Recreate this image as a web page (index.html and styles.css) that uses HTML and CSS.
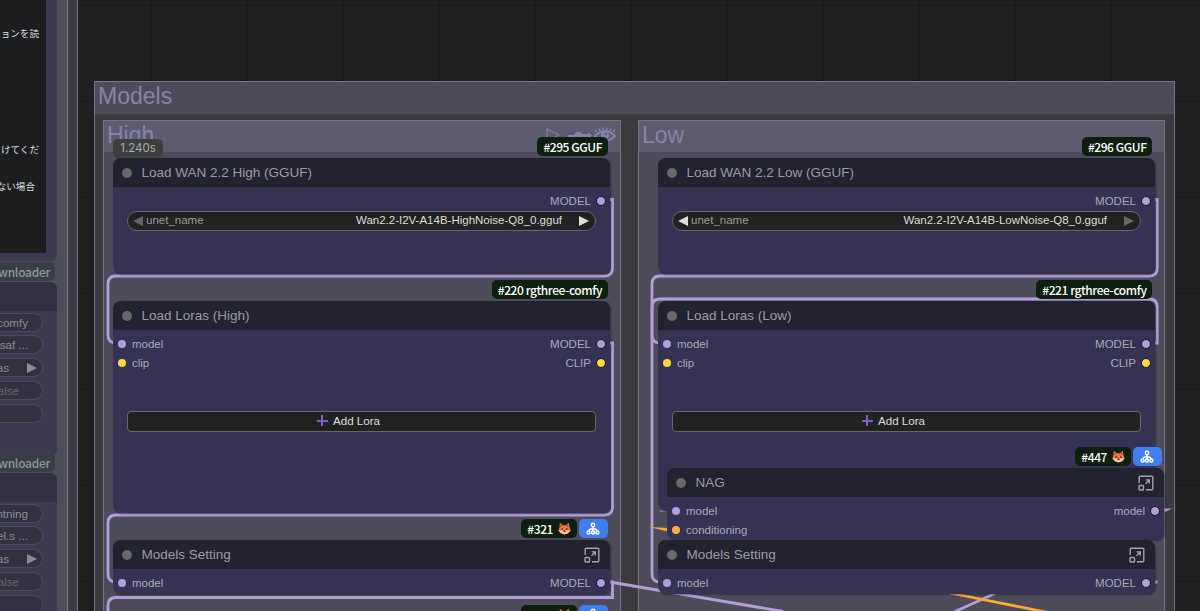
FILE: index.html
```html
<!DOCTYPE html>
<html lang="en">
<head>
    <meta charset="UTF-8">
    <meta name="viewport" content="width=device-width, initial-scale=1.0">
    <title>Workflow - Models</title>
    <link rel="stylesheet" href="styles.css">
</head>
<body>

<!-- shared icons -->
<svg class="defs" width="0" height="0">
    <symbol id="fox" viewBox="0 0 14 14">
        <path d="M2 .8 5.500 3.500h3L11.500.8l1 5 1.200 3.700-3 3-3.700 1-3.700-1-3-3L1.500 5.800z" fill="#f0763e"/>
        <path d="M2.700 2.300 4.600 4 2.700 5.300zM10.900 2.300 9 4l1.900 1.300z" fill="#8a3f3c"/>
        <path d="M.8 9.300 4.500 9 7 9.800 9.500 9l3.700.3-2.700 2.900L7 13.200l-3.500-1z" fill="#ffc9a8"/>
        <circle cx="4.500" cy="7.500" r=".9" fill="#3a2020"/>
        <circle cx="9.500" cy="7.500" r=".9" fill="#3a2020"/>
        <ellipse cx="7" cy="10" rx="1.200" ry=".9" fill="#3a2020"/>
    </symbol>
    <symbol id="tree" viewBox="0 0 14 14">
        <g fill="none" stroke="#fff" stroke-width="1.5">
            <circle cx="7" cy="3" r="1.7"/>
            <circle cx="2.6" cy="10.6" r="1.5"/>
            <circle cx="7" cy="10.6" r="1.5"/>
            <circle cx="11.4" cy="10.6" r="1.5"/>
            <path d="M7 4.700v4.400M2.800 9.100C3 7.300 4.500 6.800 7 6.800s4 .5 4.200 2.300"/>
        </g>
    </symbol>
    <symbol id="expand" viewBox="0 0 16 16">
        <g fill="none" stroke="#a2a2aa" stroke-width="1.4">
            <path d="M1.200 8V2.200q0-1 1-1h11.600q1 0 1 1v11.600q0 1-1 1H8"/>
            <rect x="1" y="10.500" width="4.500" height="4.500" rx=".8"/>
            <path d="M7.500 8.700 11 5.200M7.700 4.900h3.600v3.600"/>
        </g>
    </symbol>
</svg>

<div class="canvas">

    <!-- left side, faded nodes -->
    <div class="group side-outer"></div>
    <div class="group side-inner"></div>
    <div class="faded note-node">
        <div class="note">
            <p class="line1">ョンを読</p>
            <p class="line2">けてくだ</p>
            <p class="line3">ない場合</p>
        </div>
    </div>
    <div class="faded-badge side-badge-a">wnloader</div>
    <div class="faded side-node side-a">
        <div class="side-title"></div>
        <div class="side-widgets">
            <div class="pill">comfy</div>
            <div class="pill">.saf ...</div>
            <div class="pill combo">as <i class="tri"></i></div>
            <div class="pill dim">alse</div>
            <div class="pill"></div>
        </div>
    </div>
    <div class="faded-badge side-badge-b">wnloader</div>
    <div class="faded side-node side-b">
        <div class="side-title"></div>
        <div class="side-widgets">
            <div class="pill">htning</div>
            <div class="pill">el.s ...</div>
            <div class="pill combo">as <i class="tri"></i></div>
            <div class="pill dim">alse</div>
            <div class="pill"></div>
        </div>
    </div>

    <!-- groups -->
    <div class="group models"><div class="group-title">Models</div></div>
    <div class="group sub high">
        <div class="group-title">High
            <svg class="group-icons" width="74" height="20" viewBox="0 0 74 20">
                <path d="M4 3v12l12-6z" fill="none" stroke="#7f7b9e" stroke-width="1.200"/>
                <path d="M25 9h6q2-4 6-3l2 2h6V6l4 3.500-4 3.500v-2h-6q-4 4-8 0h-6z" fill="#8583ad"/>
                <path d="M52 10Q62 0 72 10 62 20 52 10z" fill="none" stroke="#8583ad" stroke-width="2"/>
                <circle cx="62" cy="9.500" r="4" fill="#8583ad"/>
                <circle cx="63" cy="8" r="1.300" fill="#5d5b6e"/>
                <path d="M54 6l-2-2M57 5l-1-2.500M60 4V1.500M64 4V1.500M67 5l1-2.500M70 6l2-2" stroke="#8583ad" stroke-width="1.200"/>
            </svg>
        </div>
    </div>
    <div class="group sub low"><div class="group-title">Low</div></div>

    <!-- links -->
    <svg class="links" width="1200" height="611" viewBox="0 0 1200 611">
        <g fill="none" stroke="#b39ddb" stroke-width="2.800">
            <path d="M610 199.500h2.500V268q0 8-8 8H116q-8 0-8 8v51q0 8 8 8h6"/>
            <path d="M610 343h2.500v164q0 8-8 8H116q-8 0-8 8v51q0 8 8 8h6"/>
            <path d="M610 582h2.500v15.500H116q-8 0-8 8V620"/>
            <path d="M610 582 783 611.500"/>
            <path d="M1155 199.500h2.200V268q0 8-8 8H660q-8 0-8 8v51q0 8 8 8h6"/>
            <path d="M1155 343h2.200V307q0-8-8-8H660q-8 0-8 8v267q0 8 8 8h6"/>
            <path d="M996 593 954 612"/>
            <path d="M950 593 1046 612" stroke="#ffa931"/>
        </g>
        <path d="M649 527 668 528V531.500z" fill="#ffa931"/>
        <path d="M1164 508.500h8l-8 4z" fill="#b39ddb"/>
        <circle cx="1156" cy="582" r="1.700" fill="#b39ddb"/>
        <path d="M660 511h7" stroke="#b39ddb" stroke-width="1"/>
    </svg>

    <!-- High column -->
    <div class="timer">1.240s</div>
    <div class="node load-high">
        <div class="node-title"><i class="dot"></i>Load WAN 2.2 High (GGUF)</div>
        <div class="slots">
            <div class="slot"><span class="out">MODEL<i class="port model ring"></i></span></div>
        </div>
        <div class="widget"><i class="tri left off"></i><span class="name">unet_name</span><span class="value">Wan2.2-I2V-A14B-HighNoise-Q8_0.gguf</span><i class="tri"></i></div>
    </div>
    <div class="badges b-295"><span class="badge">#295 GGUF</span></div>

    <div class="node lora-high">
        <div class="node-title"><i class="dot"></i>Load Loras (High)</div>
        <div class="slots">
            <div class="slot"><span class="in"><i class="port model"></i>model</span><span class="out">MODEL<i class="port model ring"></i></span></div>
            <div class="slot"><span class="in"><i class="port clip"></i>clip</span><span class="out">CLIP<i class="port clip ring"></i></span></div>
        </div>
        <div class="add-lora"><i class="plus"></i>Add Lora</div>
    </div>
    <div class="badges b-220"><span class="badge">#220 rgthree-comfy</span></div>

    <div class="node setting-high">
        <div class="node-title"><i class="dot"></i>Models Setting<svg class="expand"><use href="#expand"/></svg></div>
        <div class="slots">
            <div class="slot"><span class="in"><i class="port model"></i>model</span><span class="out">MODEL<i class="port model ring"></i></span></div>
        </div>
    </div>
    <div class="badges b-321"><span class="badge">#321<svg class="fox"><use href="#fox"/></svg></span><span class="badge blue"><svg class="tree"><use href="#tree"/></svg></span></div>
    <div class="badges b-next"><span class="badge">#322<svg class="fox"><use href="#fox"/></svg></span><span class="badge blue"><svg class="tree"><use href="#tree"/></svg></span></div>

    <!-- Low column -->
    <div class="node load-low">
        <div class="node-title"><i class="dot"></i>Load WAN 2.2 Low (GGUF)</div>
        <div class="slots">
            <div class="slot"><span class="out">MODEL<i class="port model ring"></i></span></div>
        </div>
        <div class="widget"><i class="tri left"></i><span class="name">unet_name</span><span class="value">Wan2.2-I2V-A14B-LowNoise-Q8_0.gguf</span><i class="tri off"></i></div>
    </div>
    <div class="badges b-296"><span class="badge">#296 GGUF</span></div>

    <div class="node lora-low">
        <div class="node-title"><i class="dot"></i>Load Loras (Low)</div>
        <div class="slots">
            <div class="slot"><span class="in"><i class="port model"></i>model</span><span class="out">MODEL<i class="port model ring"></i></span></div>
            <div class="slot"><span class="in"><i class="port clip"></i>clip</span><span class="out">CLIP<i class="port clip ring"></i></span></div>
        </div>
        <div class="add-lora"><i class="plus"></i>Add Lora</div>
    </div>
    <div class="badges b-221"><span class="badge">#221 rgthree-comfy</span></div>

    <div class="node nag">
        <div class="node-title"><i class="dot"></i>NAG<svg class="expand"><use href="#expand"/></svg></div>
        <div class="slots">
            <div class="slot"><span class="in"><i class="port model"></i>model</span><span class="out">model<i class="port model ring"></i></span></div>
            <div class="slot"><span class="in"><i class="port cond"></i>conditioning</span></div>
        </div>
    </div>
    <div class="badges b-447"><span class="badge">#447<svg class="fox"><use href="#fox"/></svg></span><span class="badge blue"><svg class="tree"><use href="#tree"/></svg></span></div>

    <div class="node setting-low">
        <div class="node-title"><i class="dot"></i>Models Setting<svg class="expand"><use href="#expand"/></svg></div>
        <div class="slots">
            <div class="slot"><span class="in"><i class="port model"></i>model</span><span class="out">MODEL<i class="port model ring"></i></span></div>
        </div>
    </div>

</div>

</body>
</html>
```
FILE: styles.css
```css
* {
    box-sizing: border-box;
}

body {
    margin: 0;
    background: #202020;
    font-family: "Liberation Sans", Arial, sans-serif;
    overflow: hidden;
}

.defs {
    position: absolute;
}

.canvas {
    position: relative;
    width: 1200px;
    height: 611px;
    overflow: hidden;
    background-color: #202020;
    background-image:
        linear-gradient(to right, #1b1b1b 1px, transparent 1px),
        linear-gradient(to bottom, #1b1b1b 1px, transparent 1px);
    background-size: 96px 96px;
    background-position: 55px 5px;
}

/* groups */
.group {
    position: absolute;
    border: 1px solid #77748f;
}

.side-outer { left: -10px; top: -10px; width: 88px; height: 640px; background: #3b3b41; }
.side-inner { left: -10px; top: -10px; width: 78px; height: 640px; background: #4e4d5b; }

.models { left: 94px; top: 81px; width: 1081px; height: 560px; background: #3a3a3f; }
.high { left: 103px; top: 120px; width: 518px; height: 520px; }
.low { left: 638px; top: 120px; width: 527px; height: 520px; }

.sub {
    background: #4e4c5a;
}

.group-title {
    display: flex;
    justify-content: space-between;
    height: 32px;
    padding: 0 3px;
    font-size: 23px;
    line-height: 29px;
    color: #8583ad;
    background: #4e4c5a;
}

.sub .group-title {
    height: 31px;
    background: #5d5b6d;
}

.group-icons {
    margin-top: 5px;
}

.links {
    position: absolute;
    left: 0;
    top: 0;
}

/* nodes */
.node {
    position: absolute;
    width: 497px;
    background: #353253;
    border-radius: 8px;
    box-shadow: 1px 1px 2px rgba(0, 0, 0, 0.35);
}

.load-high { left: 113px; top: 158px; height: 116px; }
.lora-high { left: 113px; top: 301px; height: 212px; }
.setting-high { left: 113px; top: 540px; height: 54px; }
.load-low { left: 658px; top: 158px; height: 116px; }
.lora-low { left: 658px; top: 301px; height: 210px; }
.nag { left: 667px; top: 468px; height: 72px; }
.setting-low { left: 658px; top: 540px; height: 54px; }

.node-title {
    display: flex;
    align-items: center;
    height: 29px;
    padding: 0 10px 0 9px;
    font-size: 13.500px;
    color: #9b9ba3;
    background: #232231;
    border-radius: 8px 8px 0 0;
}

.dot {
    width: 10px;
    height: 10px;
    margin-right: 9.500px;
    border-radius: 50%;
    background: #68686b;
}

.expand {
    width: 16px;
    height: 16px;
    margin-left: auto;
}

.slots {
    padding: 4px 4px 0 5px;
}

.slot {
    display: flex;
    height: 19.300px;
    font-size: 11.500px;
    line-height: 20px;
    color: #aaa9b8;
}

.in, .out {
    display: flex;
    align-items: center;
    gap: 5px;
}

.in {
    gap: 6px;
}

.out {
    margin-left: auto;
}

.port {
    width: 8px;
    height: 8px;
    border-radius: 50%;
}

.port.model { background: #b39ddb; }
.port.clip { background: #ffd93b; }
.port.cond { background: #ffa944; }

.ring {
    width: 10px;
    height: 10px;
    border: 1.500px solid #14131c;
}

.widget {
    display: flex;
    align-items: center;
    height: 20px;
    margin: 0.700px 14px 0;
    padding: 0 6px 0 5px;
    font-size: 11.500px;
    line-height: 17px;
    color: #999;
    background: #222;
    border: 1px solid #666;
    border-radius: 10px;
}

.name, .value {
    margin-top: -1px;
}

.value {
    margin-left: auto;
    margin-right: 17px;
    color: #ddd;
}

.tri {
    border-left: 10px solid #ddd;
    border-top: 5px solid transparent;
    border-bottom: 5px solid transparent;
}

.tri.left {
    margin-right: 3px;
    border-left: none;
    border-right: 10px solid #ddd;
}

.tri.off { border-left-color: #666; }
.tri.left.off { border-right-color: #666; }

.add-lora {
    display: flex;
    align-items: center;
    justify-content: center;
    height: 21px;
    margin: 38px 14px 0;
    padding-right: 26px;
    padding-bottom: 1px;
    font-size: 11.600px;
    color: #ddd;
    background: #222;
    border: 1px solid #666;
    border-radius: 4px;
}

.plus {
    width: 11px;
    height: 11px;
    margin-right: 5px;
    background:
        linear-gradient(#7e5fc4, #7e5fc4) center / 11px 2px no-repeat,
        linear-gradient(#7e5fc4, #7e5fc4) center / 2px 11px no-repeat;
}

/* badges */
.badges {
    position: absolute;
    display: flex;
    gap: 2px;
}

.b-295 { right: 592.500px; top: 137px; }
.b-220 { right: 592.500px; top: 280px; }
.b-321 { right: 592.500px; top: 519px; }
.b-next { right: 592.500px; top: 605px; }
.b-296 { right: 48px; top: 137px; }
.b-221 { right: 48px; top: 280px; }
.b-447 { right: 38.500px; top: 447px; }

.badge {
    display: flex;
    align-items: center;
    height: 19px;
    padding: 0 5.500px 0 6px;
    font-family: "Noto Sans CJK JP", sans-serif;
    font-size: 12px;
    font-weight: 500;
    line-height: 19px;
    letter-spacing: -0.430px;
    color: #fff;
    background: #0f1f0f;
    border-radius: 5px;
    white-space: nowrap;
}

.badge.blue {
    padding: 0 7.500px;
    background: #3f7ff0;
}

.fox {
    width: 13px;
    height: 13px;
    margin-left: 5px;
}

.tree {
    width: 14px;
    height: 14px;
}

.timer {
    position: absolute;
    left: 113px;
    top: 139px;
    width: 50px;
    height: 19px;
    font-family: Inter, sans-serif;
    font-size: 11.500px;
    line-height: 18px;
    text-align: center;
    color: #aaa;
    background: #3d3f3f;
    border-radius: 5px;
}

/* faded nodes on the left */
.faded {
    position: absolute;
    left: -20px;
    background: #3c3a51;
    border-radius: 7px;
}

.note-node {
    top: -10px;
    width: 77px;
    height: 271px;
}

.note {
    width: 66px;
    height: 263px;
    padding: 34px 7px 0 0;
    font-family: "Noto Sans CJK JP", sans-serif;
    font-size: 9.600px;
    color: #ddd;
    text-align: right;
    background: #1b1d1f;
    white-space: nowrap;
}

.note p {
    height: 19px;
    margin: 0;
    line-height: 19px;
}

.note .line2 { margin-top: 97px; }
.note .line3 { margin-top: 18px; padding-right: 4px; }

.faded-badge {
    position: absolute;
    left: -20px;
    width: 75px;
    height: 19px;
    padding-right: 5px;
    font-family: "Noto Sans CJK JP", sans-serif;
    font-size: 12px;
    font-weight: 500;
    line-height: 19px;
    letter-spacing: -0.300px;
    text-align: right;
    color: #8d9897;
    background: #393f47;
    border-radius: 5px;
}

.side-badge-a { top: 262px; }
.side-badge-b { top: 453px; }

.side-node {
    width: 77px;
    height: 175px;
}

.side-a { top: 282px; }
.side-b { top: 473px; }

.side-title {
    height: 29px;
    background: #323143;
    border-radius: 7px 7px 0 0;
}

.side-widgets {
    display: flex;
    flex-direction: column;
    gap: 3.800px;
    width: 63px;
    padding-top: 1.500px;
}

.pill {
    height: 19px;
    padding-right: 14px;
    font-size: 11.600px;
    line-height: 17px;
    text-align: right;
    color: #8d8c96;
    background: #323141;
    border: 1px solid #4c4a5c;
    border-radius: 10px;
}

.pill.dim {
    padding-right: 23px;
    color: #66656f;
}

.pill.combo {
    display: flex;
    align-items: center;
    justify-content: flex-end;
    gap: 18px;
    padding-right: 5px;
}

.pill .tri {
    border-left-color: #8d8c96;
}
```
